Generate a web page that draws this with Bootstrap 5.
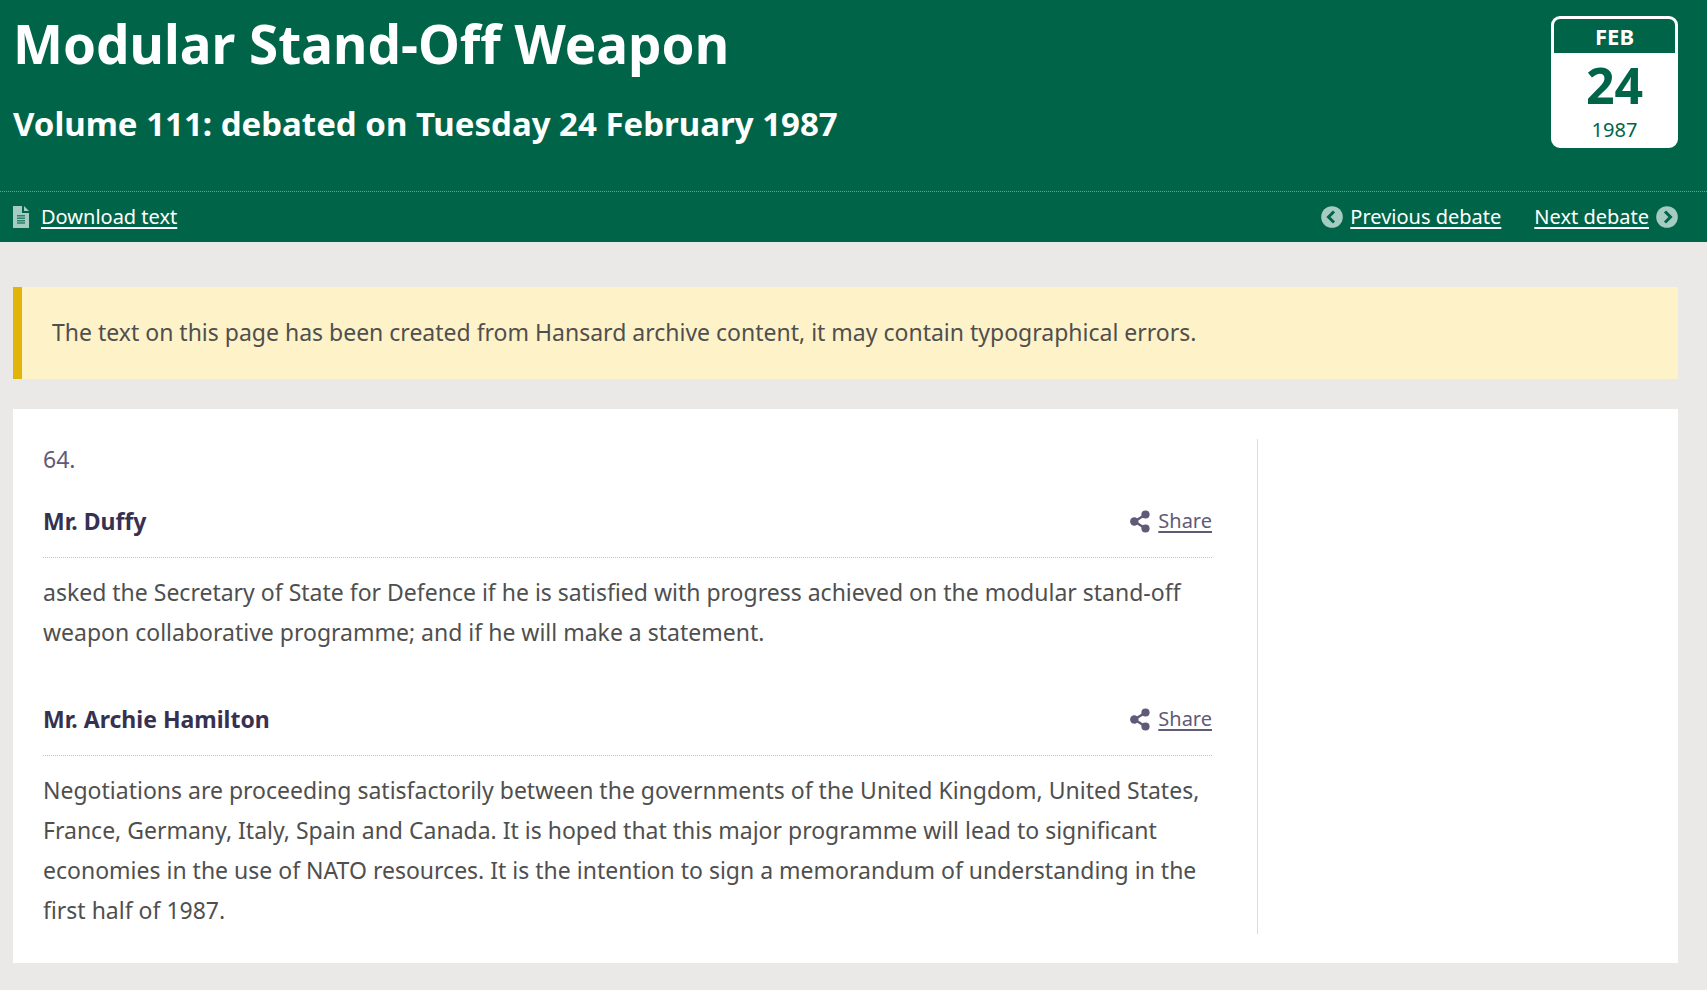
<!DOCTYPE html>
<html lang="en">
<head>
<meta charset="utf-8">
<meta name="viewport" content="width=device-width, initial-scale=1">
<title>Modular Stand-Off Weapon - Hansard</title>
<link href="https://cdn.jsdelivr.net/npm/bootstrap@5.3.0/dist/css/bootstrap.min.css" rel="stylesheet">
<style>
  :root { --green: #006548; --ink: #373151; --muted: #5f5a78; --pale: #a6cbc0; }
  body { background: #eae9e7; color: #4f4f4f; font-family: "Noto Sans", sans-serif; font-size: 23px; line-height: 40px; }
  .page-gutter { padding-left: 13px; padding-right: 29px; }
  .hero { background: var(--green); color: #fff; }
  .hero-main { padding-top: 12px; padding-bottom: 43px; }
  .hero h1 { font-size: 53px; line-height: 64px; margin-bottom: 26px; }
  .hero h2 { font-size: 33px; line-height: 44px; }
  .hero-tools { border-top: 1px dotted #66a391; min-height: 51px; font-size: 20px; line-height: 30px; }
  .hero-tools a { color: #fff; }
  .debate-link { gap: 7px; }
  .debate-links { gap: 33px; }
  a { text-decoration-thickness: 2px; text-underline-offset: 3px; text-decoration-skip-ink: none; }
  .hero-tools svg { color: var(--pale); }
  .date-box { width: 127px; margin-top: 4px; border: 3px solid #fff; border-radius: 9px; background: #fff; color: var(--green); font-size: 20px; }
  .date-month { background: var(--green); color: #fff; font-size: 22px; line-height: 34px; border-radius: 6px 6px 0 0; }
  .date-day { font-size: 50px; line-height: 64px; }
  .date-year { line-height: 26px; padding-bottom: 2px; }
  .archive-note { margin-top: 45px; margin-bottom: 30px; padding: 25px 30px 27px; background: #fef2c8; border-left: 9px solid #e0b408; }
  .debate { padding: 30px 15px 29px 30px; background: #fff; }
  .debate-main { border-right: 1px solid #dcdcdc; padding-right: 45px; padding-bottom: 4px; }
  .question-no { color: var(--muted); margin-bottom: 22px; }
  .contribution + .contribution { margin-top: 47px; }
  .speaker { padding-bottom: 16px; border-bottom: 1px dotted #c4c4c4; margin-bottom: 14px; }
  .speaker h3 { font-size: 23px; line-height: 40px; color: var(--ink); }
  .share { color: var(--muted); font-size: 20px; line-height: 40px; }
  .share:hover { color: var(--ink); }
</style>
</head>
<body>
<header class="hero">
  <div class="hero-main page-gutter d-flex justify-content-between align-items-start">
    <div>
      <h1 class="fw-bold">Modular Stand-Off Weapon</h1>
      <h2 class="fw-bold mb-0">Volume 111: debated on Tuesday 24 February 1987</h2>
    </div>
    <div class="date-box text-center flex-shrink-0">
      <div class="date-month fw-bold">FEB</div>
      <div class="date-day fw-bold">24</div>
      <div class="date-year">1987</div>
    </div>
  </div>
  <nav class="hero-tools page-gutter d-flex justify-content-between align-items-center" aria-label="Debate">
    <a href="#" class="d-flex align-items-center text-decoration-none">
      <svg width="16" height="22" viewBox="0 0 16 22" aria-hidden="true"><path fill="currentColor" d="M0 0h9v7h7v15H0z"/><path fill="currentColor" d="M11 0l5 5h-5z"/><path stroke="#2f8069" stroke-width="1.6" d="M4 9.8h8M4 12.3h8M4 14.8h8M4 17h8"/></svg>
      <span class="text-decoration-underline ms-2 ps-1">Download text</span>
    </a>
    <div class="debate-links d-flex">
      <a href="#" class="debate-link d-flex align-items-center text-decoration-none">
        <svg width="22" height="22" viewBox="0 0 22 22" aria-hidden="true"><circle cx="11" cy="11" r="10.8" fill="currentColor"/><path d="M13 5.5L7.5 11l5.5 5.5" fill="none" stroke="#006548" stroke-width="3"/></svg>
        <span class="text-decoration-underline">Previous debate</span>
      </a>
      <a href="#" class="debate-link d-flex align-items-center text-decoration-none">
        <span class="text-decoration-underline">Next debate</span>
        <svg width="22" height="22" viewBox="0 0 22 22" aria-hidden="true"><circle cx="11" cy="11" r="10.8" fill="currentColor"/><path d="M9 5.5L14.5 11 9 16.5" fill="none" stroke="#006548" stroke-width="3"/></svg>
      </a>
    </div>
  </nav>
</header>

<main class="page-gutter pb-4">
  <div class="archive-note" role="note">The text on this page has been created from Hansard archive content, it may contain typographical errors.</div>
  <div class="debate">
    <div class="row g-0">
      <div class="col-9 debate-main">
        <p class="question-no">64.</p>
        <article class="contribution">
          <div class="speaker d-flex justify-content-between align-items-center">
            <h3 class="fw-bold mb-0">Mr. Duffy</h3>
            <a href="#" class="share d-flex align-items-center text-decoration-none">
              <svg width="20" height="23" viewBox="0 0 20 23" aria-hidden="true" fill="currentColor"><path d="M15.5 4.5L4.5 11.500l11 7" fill="none" stroke="currentColor" stroke-width="2.4"/><circle cx="4.3" cy="11.5" r="4.2"/><circle cx="15.5" cy="4.5" r="4.1"/><circle cx="15.5" cy="18.5" r="4.1"/></svg>
              <span class="text-decoration-underline ms-2">Share</span>
            </a>
          </div>
          <p class="mb-0">asked the Secretary of State for Defence if he is satisfied with progress achieved on the modular stand-off weapon collaborative programme; and if he will make a statement.</p>
        </article>
        <article class="contribution">
          <div class="speaker d-flex justify-content-between align-items-center">
            <h3 class="fw-bold mb-0">Mr. Archie Hamilton</h3>
            <a href="#" class="share d-flex align-items-center text-decoration-none">
              <svg width="20" height="23" viewBox="0 0 20 23" aria-hidden="true" fill="currentColor"><path d="M15.5 4.5L4.5 11.500l11 7" fill="none" stroke="currentColor" stroke-width="2.4"/><circle cx="4.3" cy="11.5" r="4.2"/><circle cx="15.5" cy="4.5" r="4.1"/><circle cx="15.5" cy="18.5" r="4.1"/></svg>
              <span class="text-decoration-underline ms-2">Share</span>
            </a>
          </div>
          <p class="mb-0">Negotiations are proceeding satisfactorily between the governments of the United Kingdom, United States, France, Germany, Italy, Spain and Canada. It is hoped that this major programme will lead to significant economies in the use of NATO resources. It is the intention to sign a memorandum of understanding in the first half of 1987.</p>
        </article>
      </div>
    </div>
  </div>
</main>
<script src="https://cdn.jsdelivr.net/npm/bootstrap@5.3.0/dist/js/bootstrap.bundle.min.js"></script>
</body>
</html>
